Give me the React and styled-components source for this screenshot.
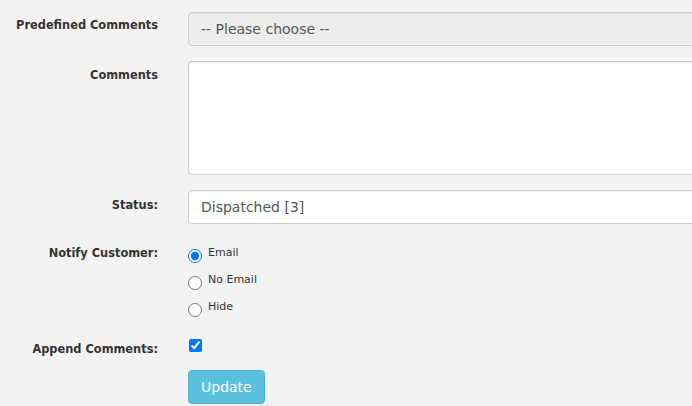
import React from "react";
import styled, { createGlobalStyle } from "styled-components";

const GlobalStyle = createGlobalStyle`
  body {
    margin: 0;
    background: #f3f3f3;
    font-family: "DejaVu Sans", Verdana, sans-serif;
    overflow: hidden;
  }
`;

const Form = styled.form`
  padding-top: 12px;
  width: 720px;
`;

const Row = styled.div`
  display: flex;
  align-items: flex-start;
  margin-bottom: ${(p) => p.$gap || 15}px;
`;

const Label = styled.label`
  width: 158px;
  flex: none;
  padding-right: 30px;
  padding-top: ${(p) => p.$top || 0}px;
  text-align: right;
  font-size: 11.4px;
  font-weight: bold;
  color: #333;
  line-height: 14px;
`;

const Field = styled.div`
  flex: 1;
`;

const Select = styled.select`
  appearance: none;
  display: block;
  width: 530px;
  height: 34px;
  padding: 0 12px;
  font-family: "DejaVu Sans", Verdana, sans-serif;
  font-size: 14px;
  color: #555;
  background: ${(p) => (p.$muted ? "#ececec" : "#fff")};
  border: 1px solid #ccc;
  border-radius: 4px;
  box-shadow: inset 0 1px 1px rgba(0, 0, 0, 0.075);
  outline: none;
`;

const TextArea = styled.textarea`
  display: block;
  box-sizing: border-box;
  width: 530px;
  height: 114px;
  background: #fff;
  border: 1px solid #ccc;
  border-radius: 4px;
  box-shadow: inset 0 1px 1px rgba(0, 0, 0, 0.075);
  resize: none;
  outline: none;
`;

const Choices = styled.div`
  display: flex;
  flex-direction: column;
  gap: 10px;
  padding-top: 2px;
`;

const Choice = styled.label`
  display: flex;
  align-items: flex-start;
  font-size: 11px;
  color: #333;
  line-height: 13px;

  input {
    margin: 3px 6px 0 0;
    width: 14px;
    height: 14px;
  }
`;

const Check = styled.input`
  display: block;
  margin: 0 0 0 1px;
  width: 13px;
  height: 13px;
`;

const Button = styled.button`
  font-family: "DejaVu Sans", Verdana, sans-serif;
  font-size: 14px;
  color: #fff;
  background: #5bc0de;
  border: 1px solid #46b8da;
  border-radius: 4px;
  height: 34px;
  padding: 0 12px;
`;

export default function App() {
  return (
    <>
      <GlobalStyle />
      <Form>
        <Row $gap={15}>
          <Label $top={6}>Predefined Comments</Label>
          <Field>
            <Select $muted defaultValue="">
              <option value="">-- Please choose --</option>
            </Select>
          </Field>
        </Row>
        <Row $gap={15}>
          <Label $top={7}>Comments</Label>
          <Field>
            <TextArea />
          </Field>
        </Row>
        <Row $gap={20}>
          <Label $top={8}>Status:</Label>
          <Field>
            <Select defaultValue="3">
              <option value="3">Dispatched [3]</option>
            </Select>
          </Field>
        </Row>
        <Row $gap={22}>
          <Label $top={2}>Notify Customer:</Label>
          <Field>
            <Choices>
              <Choice>
                <input type="radio" name="notify" defaultChecked />
                Email
              </Choice>
              <Choice>
                <input type="radio" name="notify" />
                No Email
              </Choice>
              <Choice>
                <input type="radio" name="notify" />
                Hide
              </Choice>
            </Choices>
          </Field>
        </Row>
        <Row $gap={14}>
          <Label $top={3}>Append Comments:</Label>
          <Field>
            <Check type="checkbox" defaultChecked />
          </Field>
        </Row>
        <Row>
          <Label />
          <Field>
            <Button type="button">Update</Button>
          </Field>
        </Row>
      </Form>
    </>
  );
}
